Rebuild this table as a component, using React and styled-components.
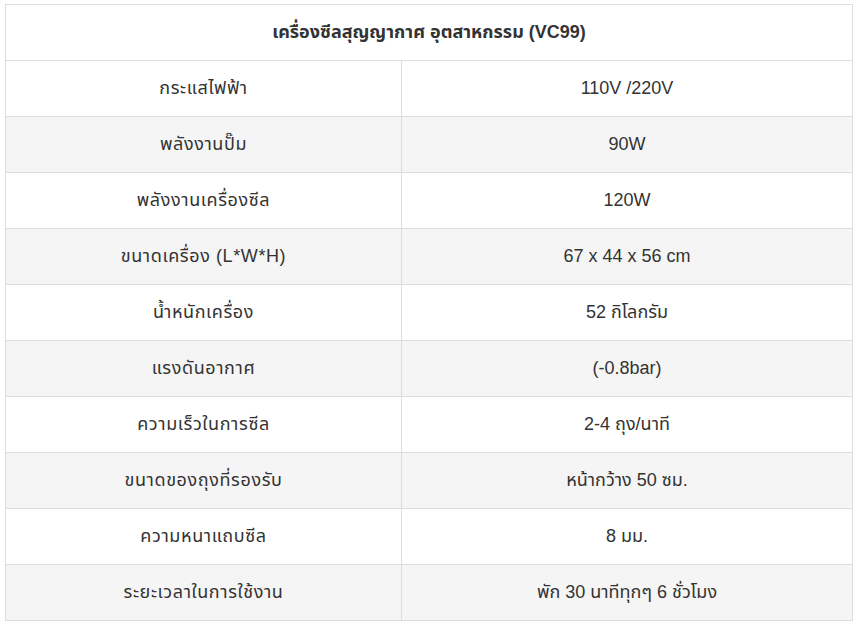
import React from 'react';
import styled, { createGlobalStyle } from 'styled-components';

const GlobalStyle = createGlobalStyle`
  body {
    margin: 0;
    background: #fff;
    font-family: "Liberation Sans", "Noto Sans Thai", "Noto Sans", Arial, sans-serif;
  }
`;

const Wrap = styled.div`
  padding: 4px 14px 0 5px;
`;

const Table = styled.table`
  width: 848px;
  border-collapse: collapse;
  table-layout: fixed;
  color: #333;
  font-size: 18px;
`;

const HeadCell = styled.th`
  height: 55px;
  border: 1px solid #ddd;
  font-weight: bold;
  text-align: center;
  padding: 0 8px;
  background: #fff;
`;

const Row = styled.tr`
  background: ${props => (props.$striped ? '#f5f5f5' : '#fff')};
`;

const Cell = styled.td`
  height: 55px;
  border: 1px solid #ddd;
  text-align: center;
  padding: 0 8px;
  letter-spacing: ${props => (props.$thai ? '0.6px' : '0')};
`;

const specs = [
  ['กระแสไฟฟ้า', '110V /220V'],
  ['พลังงานปั๊ม', '90W'],
  ['พลังงานเครื่องซีล', '120W'],
  ['ขนาดเครื่อง (L*W*H)', '67 x 44 x 56 cm'],
  ['น้ำหนักเครื่อง', '52 กิโลกรัม'],
  ['แรงดันอากาศ', '(-0.8bar)'],
  ['ความเร็วในการซีล', '2-4 ถุง/นาที'],
  ['ขนาดของถุงที่รองรับ', 'หน้ากว้าง 50 ซม.'],
  ['ความหนาแถบซีล', '8 มม.'],
  ['ระยะเวลาในการใช้งาน', 'พัก 30 นาทีทุกๆ 6 ชั่วโมง'],
];

export default function App() {
  return (
    <>
      <GlobalStyle />
      <Wrap>
        <Table>
          <colgroup>
            <col style={{ width: 396 }} />
            <col />
          </colgroup>
          <thead>
            <tr>
              <HeadCell colSpan={2}>เครื่องซีลสุญญากาศ อุตสาหกรรม (VC99)</HeadCell>
            </tr>
          </thead>
          <tbody>
            {specs.map(([label, value], i) => (
              <Row key={label} $striped={i % 2 === 1}>
                <Cell $thai>{label}</Cell>
                <Cell>{value}</Cell>
              </Row>
            ))}
          </tbody>
        </Table>
      </Wrap>
    </>
  );
}
